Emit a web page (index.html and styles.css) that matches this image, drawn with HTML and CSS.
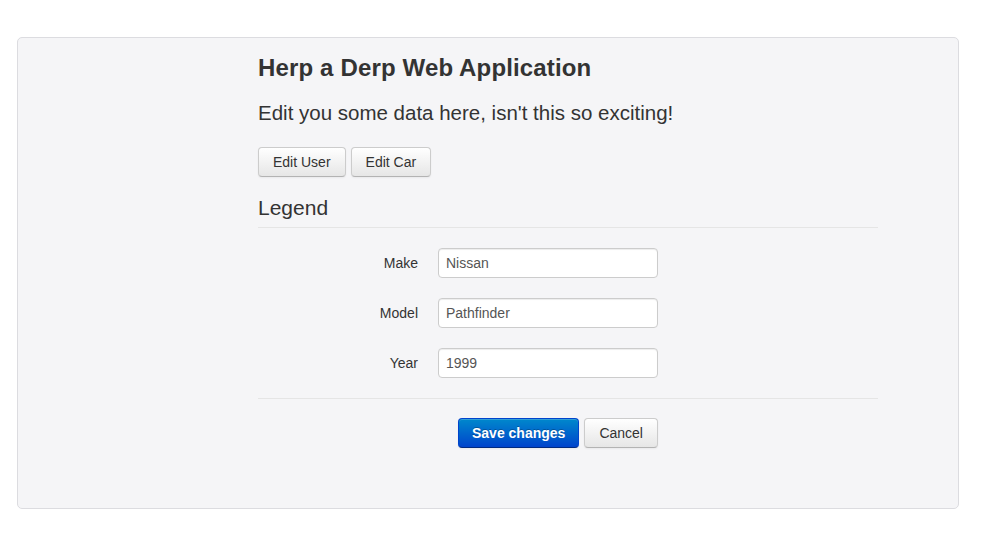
FILE: index.html
```html
<!DOCTYPE html>
<html>
<head>
<meta charset="utf-8">
<link rel="stylesheet" href="styles.css">
</head>
<body>
<div class="hero">
  <div class="content">
    <h1 class="title">Herp a Derp Web Application</h1>
    <p class="lead">Edit you some data here, isn't this so exciting!</p>
    <div class="tabs">
      <button class="btn">Edit User</button>
      <button class="btn">Edit Car</button>
    </div>
    <form class="form">
      <div class="legend">Legend</div>
      <div class="group">
        <label class="label">Make</label>
        <input class="input" type="text" value="Nissan">
      </div>
      <div class="group">
        <label class="label">Model</label>
        <input class="input" type="text" value="Pathfinder">
      </div>
      <div class="group">
        <label class="label">Year</label>
        <input class="input" type="text" value="1999">
      </div>
      <div class="actions">
        <button class="btn btn-primary" type="button">Save changes</button>
        <button class="btn" type="button">Cancel</button>
      </div>
    </form>
  </div>
</div>
</body>
</html>
```
FILE: styles.css
```css
html, body {
  margin: 0;
  background: #ffffff;
}
body {
  padding: 37px 0 0 17px;
  font-family: "Liberation Sans", Arial, sans-serif;
  color: #333333;
  font-size: 14px;
  line-height: 20px;
}
.hero {
  box-sizing: border-box;
  width: 942px;
  height: 472px;
  background: #f5f5f7;
  border: 1px solid #dcdce0;
  border-radius: 5px;
  padding: 15px 0 0 240px;
}
.content {
  width: 620px;
}
.title {
  margin: 0;
  font-size: 24px;
  line-height: 30px;
  font-weight: bold;
  color: #333333;
  letter-spacing: 0.15px;
}
.lead {
  margin: 15px 0 0;
  font-size: 20.5px;
  line-height: 30px;
  font-weight: normal;
  color: #333333;
}
.tabs {
  display: flex;
  gap: 5px;
  margin-top: 19px;
}
.btn {
  box-sizing: border-box;
  height: 30px;
  padding: 4px 14px;
  font-family: "Liberation Sans", Arial, sans-serif;
  font-size: 14px;
  line-height: 20px;
  color: #333333;
  background: linear-gradient(#ffffff, #e6e6e6);
  border: 1px solid #cccccc;
  border-bottom-color: #b3b3b3;
  border-radius: 4px;
  box-shadow: inset 0 1px 0 rgba(255,255,255,.2), 0 1px 2px rgba(0,0,0,.05);
  cursor: pointer;
}
.btn-primary {
  padding: 4px 13px;
  font-weight: bold;
  color: #ffffff;
  background: linear-gradient(#0088cc, #0044cc);
  border-color: #0044cc #0044cc #002a80;
  text-shadow: 0 -1px 0 rgba(0,0,0,.25);
}
.form {
  margin: 10px 0 0;
}
.legend {
  font-size: 21px;
  line-height: 40px;
  padding-top: 1px;
  height: 39px;
  color: #333333;
  border-bottom: 1px solid #e5e5e5;
  margin-bottom: 20px;
}
.group {
  display: flex;
  align-items: center;
  gap: 20px;
  margin-bottom: 20px;
}
.label {
  width: 160px;
  text-align: right;
  font-size: 14px;
  color: #333333;
}
.input {
  box-sizing: border-box;
  width: 220px;
  height: 30px;
  padding: 4px 7px;
  font-family: "Liberation Sans", Arial, sans-serif;
  font-size: 14px;
  color: #555555;
  background: #ffffff;
  border: 1px solid #cccccc;
  border-radius: 4px;
  box-shadow: inset 0 1px 1px rgba(0,0,0,.075);
  outline: none;
}
.actions {
  display: flex;
  gap: 5px;
  border-top: 1px solid #e5e5e5;
  padding: 19px 0 20px 200px;
}
```
